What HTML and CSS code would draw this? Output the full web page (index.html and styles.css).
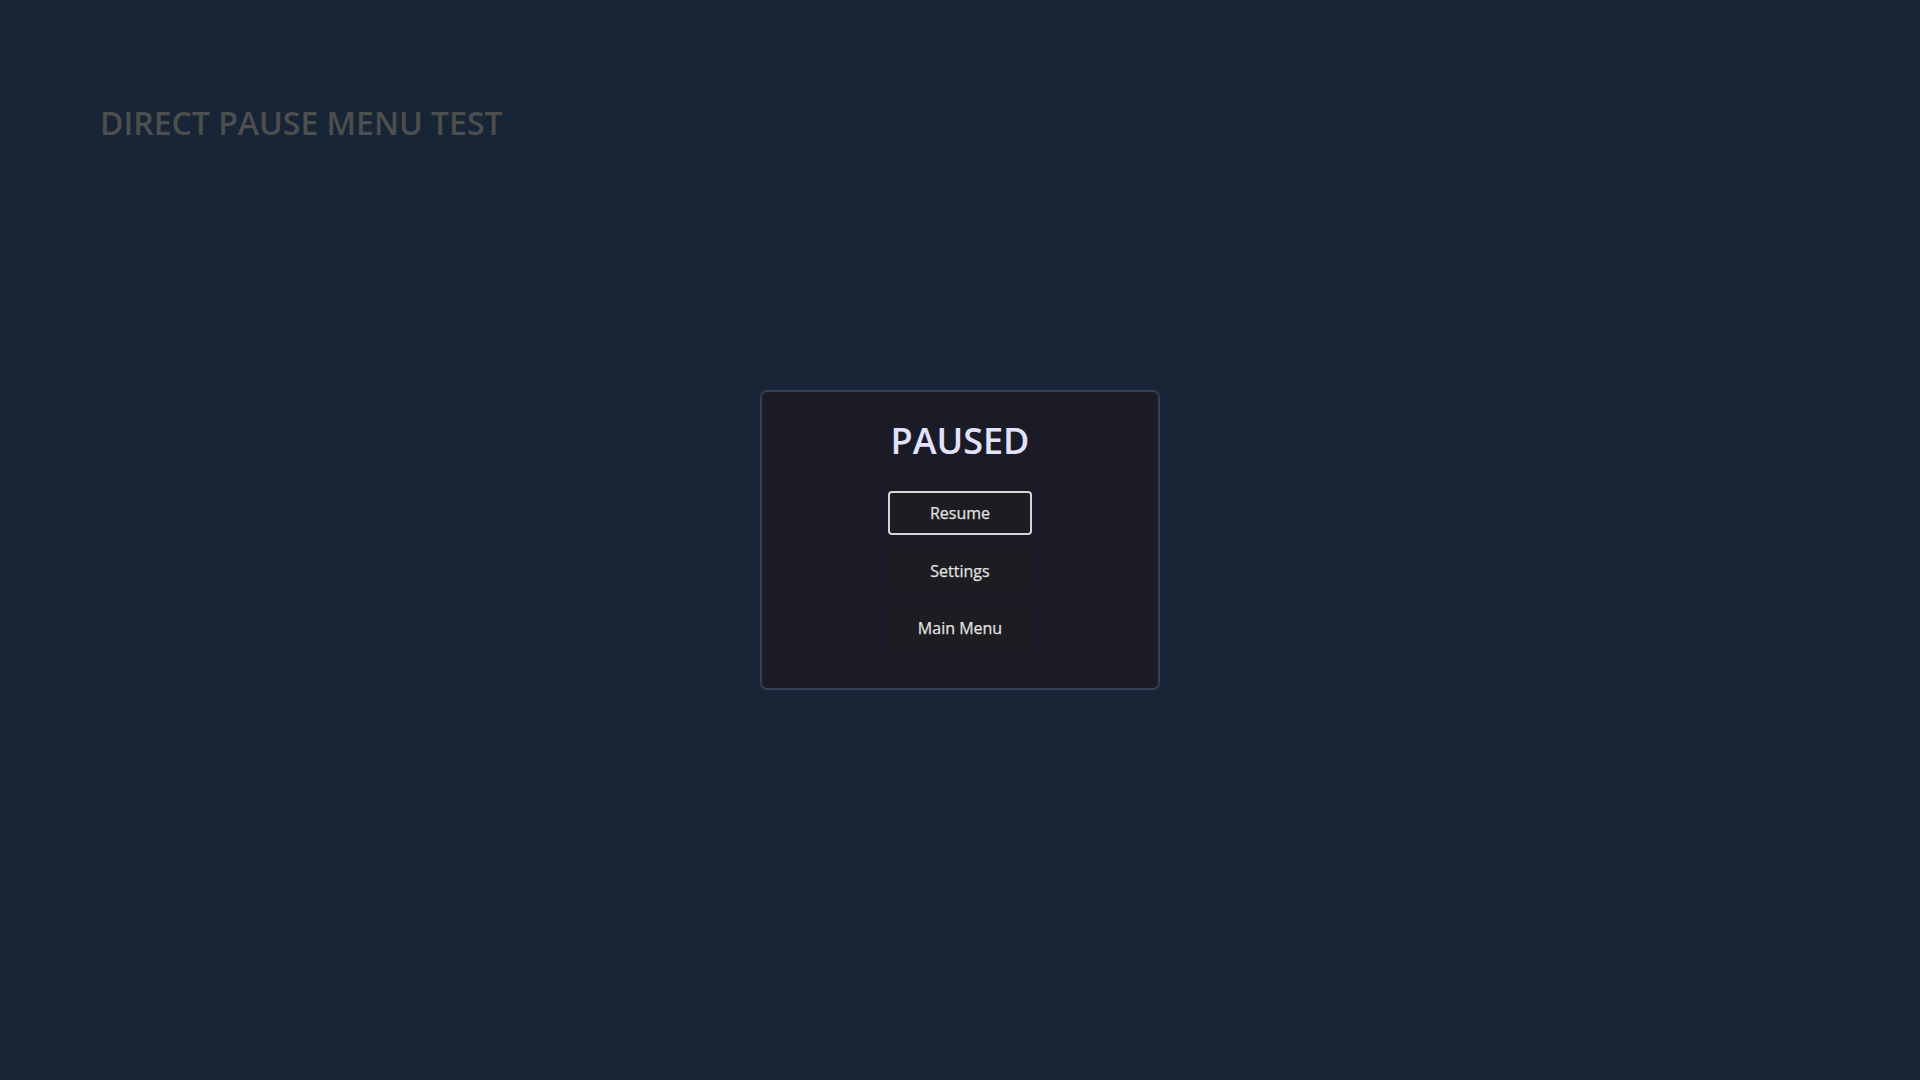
FILE: index.html
```html
<!DOCTYPE html>
<html lang="en">
<head>
<meta charset="utf-8">
<title>Direct Pause Menu Test</title>
<link rel="stylesheet" href="styles.css">
</head>
<body>
<main class="page">
  <h1 class="page-title">DIRECT PAUSE MENU TEST</h1>
</main>
<div class="overlay">
  <section class="pause-panel">
    <h2 class="pause-title">PAUSED</h2>
    <div class="pause-buttons">
      <button class="pause-btn is-focused">Resume</button>
      <button class="pause-btn">Settings</button>
      <button class="pause-btn">Main Menu</button>
    </div>
  </section>
</div>
</body>
</html>
```

FILE: styles.css
```css
html, body {
  margin: 0;
  padding: 0;
  height: 100%;
}

body {
  background: #172536;
  font-family: "Open Sans", "Liberation Sans", sans-serif;
  overflow: hidden;
}

.page {
  padding: 101px 100px 100px;
}

.page-title {
  margin: 0;
  font-size: 32px;
  font-weight: 600;
  line-height: normal;
  color: #4e4e4e;
}

.overlay {
  position: fixed;
  inset: 0;
  display: flex;
  align-items: center;
  justify-content: center;
}

.pause-panel {
  box-sizing: border-box;
  width: 400px;
  height: 300px;
  padding-top: 24px;
  background: #1b1b28;
  border: 2px solid #393d55;
  border-radius: 7px;
  display: flex;
  flex-direction: column;
  align-items: center;
}

.pause-title {
  margin: 0 0 26px;
  font-size: 36px;
  font-weight: 600;
  line-height: normal;
  color: #e2e2fb;
}

.pause-buttons {
  display: flex;
  flex-direction: column;
  align-items: center;
  gap: 19px;
}

.pause-btn {
  width: 140px;
  padding: 8px 0;
  margin: 0;
  border: none;
  border-radius: 3px;
  background: #1c1c21;
  color: #e2e2e2;
  font-family: "Open Sans", "Liberation Sans", sans-serif;
  font-size: 16px;
  font-weight: 500;
  -webkit-text-stroke: 0.25px currentColor;
  line-height: normal;
  text-align: center;
}

.pause-btn.is-focused {
  box-sizing: content-box;
  padding: 9px 0;
  margin-bottom: -2px;
  border: 2px solid #d6d6d6;
  border-radius: 4px;
}
```
